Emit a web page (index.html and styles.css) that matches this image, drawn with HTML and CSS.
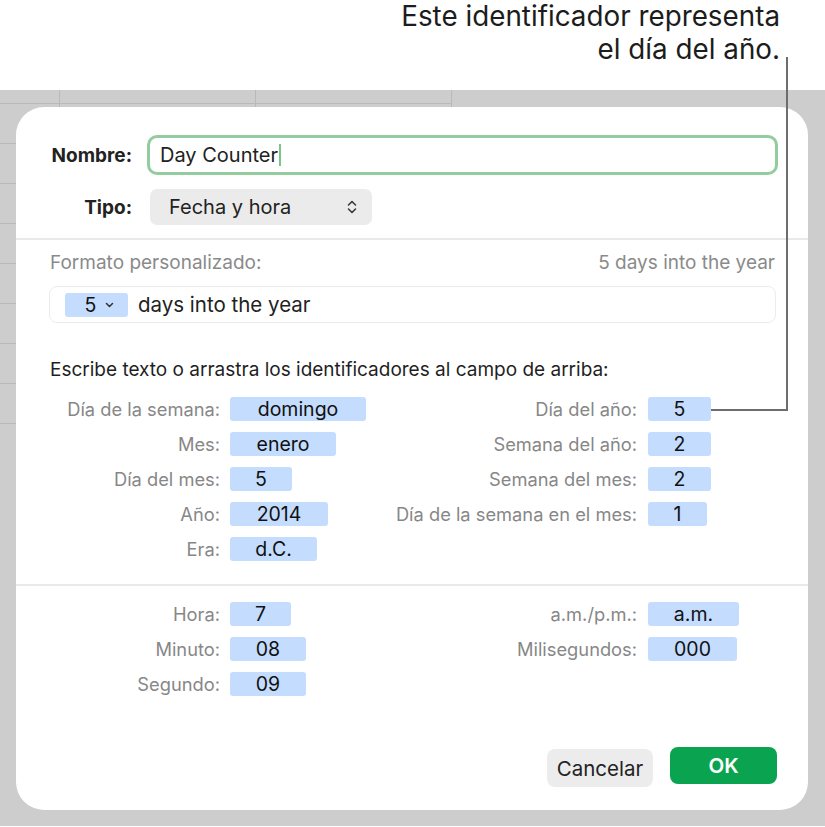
FILE: index.html
```html
<!DOCTYPE html>
<html lang="es">
<head>
<meta charset="utf-8">
<title>Day Counter</title>
<link rel="stylesheet" href="styles.css">
</head>
<body>
<div class="page">
  <header class="callout">
    <p class="callout-text">Este identificador representa<br>el día del año.</p>
  </header>
  <main class="desk">
    <svg class="sheet" width="825" height="736" viewBox="0 0 825 736" aria-hidden="true">
      <g stroke="#b9b9b9" stroke-width="1" fill="none">
        <line x1="0" y1="13.5" x2="452" y2="13.5"/>
        <line x1="59.5" y1="0" x2="59.5" y2="30"/>
        <line x1="255.5" y1="0" x2="255.5" y2="20"/>
        <line x1="451.5" y1="0" x2="451.5" y2="20"/>
        <line x1="0" y1="53.5" x2="16" y2="53.5"/>
        <line x1="0" y1="93.5" x2="16" y2="93.5"/>
        <line x1="0" y1="133.5" x2="16" y2="133.5"/>
        <line x1="0" y1="173.5" x2="16" y2="173.5"/>
        <line x1="0" y1="213.5" x2="16" y2="213.5"/>
        <line x1="0" y1="253.5" x2="16" y2="253.5"/>
        <line x1="0" y1="293.5" x2="16" y2="293.5"/>
        <line x1="0" y1="333.5" x2="16" y2="333.5"/>
      </g>
    </svg>
    <section class="dialog">
      <div class="form-row">
        <span class="form-label">Nombre:</span>
        <div class="name-field"><span>Day Counter</span><span class="caret"></span></div>
      </div>
      <div class="form-row type-row">
        <span class="form-label">Tipo:</span>
        <div class="popup">
          <span>Fecha y hora</span>
          <svg class="updown" width="10" height="16" viewBox="0 0 10 16"><path d="M1.5 6 L5 2.5 L8.5 6 M1.5 10 L5 13.5 L8.5 10" fill="none" stroke="#3a3a3a" stroke-width="1.6" stroke-linecap="round" stroke-linejoin="round"/></svg>
        </div>
      </div>
      <hr class="sep">
      <div class="format-head"><span>Formato personalizado:</span><span>5 days into the year</span></div>
      <div class="format-field">
        <span class="tok tok-pop"><span>5</span><svg width="9" height="6" viewBox="0 0 9 6"><path d="M1.5 1.5 L4.5 4.5 L7.5 1.5" fill="none" stroke="#333" stroke-width="1.5" stroke-linecap="round" stroke-linejoin="round"/></svg></span>
        <span class="format-text">days into the year</span>
      </div>
      <p class="hint">Escribe texto o arrastra los identificadores al campo de arriba:</p>
      <div class="tokens date-tokens">
        <span class="lbl">Día de la semana:</span><span class="tok w136">domingo</span>
        <span class="lbl r">Día del año:</span><span class="tok w63">5</span>
        <span class="lbl">Mes:</span><span class="tok w106">enero</span>
        <span class="lbl r">Semana del año:</span><span class="tok w63">2</span>
        <span class="lbl">Día del mes:</span><span class="tok w62">5</span>
        <span class="lbl r">Semana del mes:</span><span class="tok w63">2</span>
        <span class="lbl">Año:</span><span class="tok w98">2014</span>
        <span class="lbl r">Día de la semana en el mes:</span><span class="tok w59">1</span>
        <span class="lbl">Era:</span><span class="tok w87">d.C.</span>
        <span></span><span></span>
      </div>
      <hr class="sep sep2">
      <div class="tokens time-tokens">
        <span class="lbl">Hora:</span><span class="tok w61">7</span>
        <span class="lbl r">a.m./p.m.:</span><span class="tok w91">a.m.</span>
        <span class="lbl">Minuto:</span><span class="tok w76">08</span>
        <span class="lbl r">Milisegundos:</span><span class="tok w89">000</span>
        <span class="lbl">Segundo:</span><span class="tok w76">09</span>
        <span></span><span></span>
      </div>
      <div class="buttons">
        <button class="btn cancel" type="button">Cancelar</button>
        <button class="btn ok" type="button">OK</button>
      </div>
    </section>
  </main>
  <svg class="leader" width="825" height="827" viewBox="0 0 825 827" aria-hidden="true">
    <polyline points="787,57 787,410 711,410" fill="none" stroke="#6d6d6d" stroke-width="2"/>
  </svg>
</div>
</body>
</html>
```

FILE: styles.css
```css
html, body {
  margin: 0;
  padding: 0;
  background: #fff;
}

body {
  font-family: Inter, "Noto Sans", "Liberation Sans", sans-serif;
  color: #1f1f1f;
}

.page {
  position: relative;
  width: 825px;
  height: 827px;
  overflow: hidden;
  background: #fff;
}

.callout {
  height: 90px;
  box-sizing: border-box;
  padding-right: 45px;
  text-align: right;
}

.callout-text {
  margin: 0;
  font-size: 27.8px;
  line-height: 33px;
  color: #1c1c1c;
}

.desk {
  position: relative;
  height: 736px;
  box-sizing: border-box;
  padding: 17px 0 0 16px;
  background: #cdcdcd;
}

.sheet {
  position: absolute;
  left: 0;
  top: 0;
}

.dialog {
  position: relative;
  width: 792px;
  height: 703px;
  box-sizing: border-box;
  padding-top: 28px;
  background: #fff;
  border-radius: 28px;
}

.form-row {
  display: flex;
  align-items: center;
}

.form-label {
  width: 131px;
  box-sizing: border-box;
  padding-right: 15px;
  text-align: right;
  font-size: 19px;
  font-weight: 700;
  color: #222;
}

.name-field {
  display: flex;
  align-items: center;
  width: 631px;
  height: 40px;
  box-sizing: border-box;
  padding-left: 10px;
  border: 3px solid #93cc9d;
  border-radius: 10px;
  font-size: 20px;
  color: #222;
}

.caret {
  width: 2px;
  height: 22px;
  margin-left: 1px;
  background: #7cc48a;
}

.type-row {
  margin-top: 14px;
}

.popup {
  display: flex;
  align-items: center;
  justify-content: space-between;
  width: 222px;
  height: 36px;
  margin-left: 3px;
  box-sizing: border-box;
  padding: 0 15px 0 19px;
  background: #ebebeb;
  border-radius: 7px;
  font-size: 20px;
  color: #222;
}

.sep {
  height: 2px;
  margin: 13px 0 0;
  border: 0;
  background: #e9e9e9;
}

.format-head {
  display: flex;
  justify-content: space-between;
  margin: 13px 33px 0 34px;
  font-size: 19px;
  line-height: 20px;
  color: #8a8a8a;
}

.format-field {
  display: flex;
  align-items: center;
  gap: 10px;
  height: 37px;
  margin: 13px 32px 0 33px;
  box-sizing: border-box;
  padding-left: 15px;
  border: 1px solid #ececec;
  border-radius: 8px;
}

.format-text {
  font-size: 20.5px;
  color: #222;
}

.hint {
  margin: 37px 0 0 34px;
  font-size: 19px;
  line-height: 20px;
  color: #1f1f1f;
}

.tokens {
  display: grid;
  grid-template-columns: 214px 160px 258px 1fr;
  grid-auto-rows: 35px;
  align-items: center;
  margin-top: 11.5px;
}

.time-tokens {
  margin-top: 10.5px;
}

.sep2 {
  margin-top: 17.5px;
}

.lbl {
  padding-right: 10px;
  text-align: right;
  white-space: nowrap;
  font-size: 18.3px;
  line-height: 22px;
  color: #878787;
}

.lbl.r {
  padding-right: 11px;
}

.tok {
  display: inline-flex;
  align-items: center;
  justify-content: center;
  justify-self: start;
  height: 24px;
  background: #c4dcfd;
  border-radius: 3px;
  font-size: 19.5px;
  color: #111;
}

.tok-pop {
  width: 63px;
  gap: 9px;
  padding-left: 6px;
  box-sizing: border-box;
}

.w59 { width: 59px; }
.w61 { width: 61px; }
.w62 { width: 62px; }
.w63 { width: 63px; }
.w76 { width: 76px; }
.w87 { width: 87px; }
.w89 { width: 89px; }
.w91 { width: 91px; }
.w98 { width: 98px; }
.w106 { width: 106px; }
.w136 { width: 136px; }

.buttons {
  display: flex;
  justify-content: flex-end;
  align-items: flex-start;
  gap: 17px;
  margin-top: 45.5px;
  padding-right: 31px;
}

.btn {
  display: flex;
  align-items: center;
  justify-content: center;
  height: 38px;
  padding: 0;
  border: 0;
  border-radius: 8px;
  font-family: inherit;
  font-size: 20.5px;
}

.cancel {
  width: 106px;
  margin-top: 2px;
  background: #ececec;
  color: #222;
}

.ok {
  width: 107px;
  height: 37px;
  background: #0aa450;
  color: #fff;
  font-weight: 600;
}

.leader {
  position: absolute;
  left: 0;
  top: 0;
  pointer-events: none;
}
```
